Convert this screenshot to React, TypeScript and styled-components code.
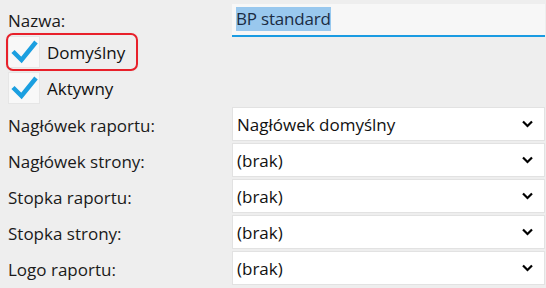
import React from 'react';
import styled, { createGlobalStyle } from 'styled-components';

const GlobalStyle = createGlobalStyle`
  html, body {
    margin: 0;
    padding: 0;
    background: #eeeeee;
  }
  body {
    font-family: 'Open Sans', 'Noto Sans', sans-serif;
    font-size: 17px;
    color: #111;
  }
`;

const Form = styled.div`
  display: grid;
  grid-template-columns: 224px 1fr;
  align-content: start;
  padding: 4px 1px 0 8px;
  width: 546px;
  height: 288px;
  box-sizing: border-box;
`;

const Label = styled.div<{ $h: number }>`
  display: flex;
  align-items: center;
  height: ${(p) => p.$h}px;
  white-space: nowrap;
  color: #1a1a1a;
`;

const TextInput = styled.div`
  height: 33px;
  box-sizing: border-box;
  background: #f7f7f7;
  border-bottom: 2px solid #1a9be2;
  padding: 2px 4px 3px;
  display: flex;
  align-items: center;
`;

const Selected = styled.span`
  background: #99c8ee;
  color: #1b2c44;
  padding: 0 0 1px 0;
  letter-spacing: -0.2px;
  line-height: 23px;
`;

const Checks = styled.div`
  grid-column: 1 / 3;
  display: flex;
  flex-direction: column;
  gap: 2px;
  margin-top: -2px;
  padding-bottom: 2px;
`;

const CheckRow = styled.div<{ $highlighted?: boolean }>`
  display: flex;
  align-items: center;
  gap: 7px;
  width: 128px;
  height: 34px;
  border-radius: 5px;
  outline: ${(p) => (p.$highlighted ? '2px solid #e8202a' : 'none')};
  box-shadow: ${(p) => (p.$highlighted ? '0 0 4px rgba(0,0,0,0.12)' : 'none')};
`;

const Box = styled.div`
  width: 32px;
  height: 32px;
  box-sizing: border-box;
  background: #f8f8f8;
  border: 1px solid #e6e6e6;
  display: flex;
  align-items: center;
  justify-content: center;
`;

const Select = styled.div`
  height: 34px;
  box-sizing: border-box;
  background: #fff;
  border: 1px solid #e2e2e2;
  display: flex;
  align-items: center;
  justify-content: space-between;
  padding: 0 11px 0 4px;
  margin-bottom: 2px;
  color: #111;
`;

const Check = () => (
  <svg width="30" height="30" viewBox="0 0 30 30">
    <path
      d="M4 14.5 L12.5 23 L27 5"
      fill="none"
      stroke="#1b9fe0"
      strokeWidth="4.5"
    />
  </svg>
);

const Chevron = () => (
  <svg width="11" height="8" viewBox="0 0 11 8">
    <path d="M1 1.5 L5.5 6 L10 1.5" fill="none" stroke="#000" strokeWidth="2.2" />
  </svg>
);

const selects = [
  ['Nagłówek raportu:', 'Nagłówek domyślny'],
  ['Nagłówek strony:', '(brak)'],
  ['Stopka raportu:', '(brak)'],
  ['Stopka strony:', '(brak)'],
  ['Logo raportu:', '(brak)'],
];

export default function App() {
  return (
    <>
      <GlobalStyle />
      <Form>
        <Label $h={33}>Nazwa:</Label>
        <TextInput>
          <Selected>BP standard</Selected>
        </TextInput>
        <Checks>
          <CheckRow $highlighted>
            <Box>
              <Check />
            </Box>
            Domyślny
          </CheckRow>
          <CheckRow>
            <Box>
              <Check />
            </Box>
            Aktywny
          </CheckRow>
        </Checks>
        {selects.map(([label, value]) => (
          <React.Fragment key={label}>
            <Label $h={36}>{label}</Label>
            <Select>
              {value}
              <Chevron />
            </Select>
          </React.Fragment>
        ))}
      </Form>
    </>
  );
}
